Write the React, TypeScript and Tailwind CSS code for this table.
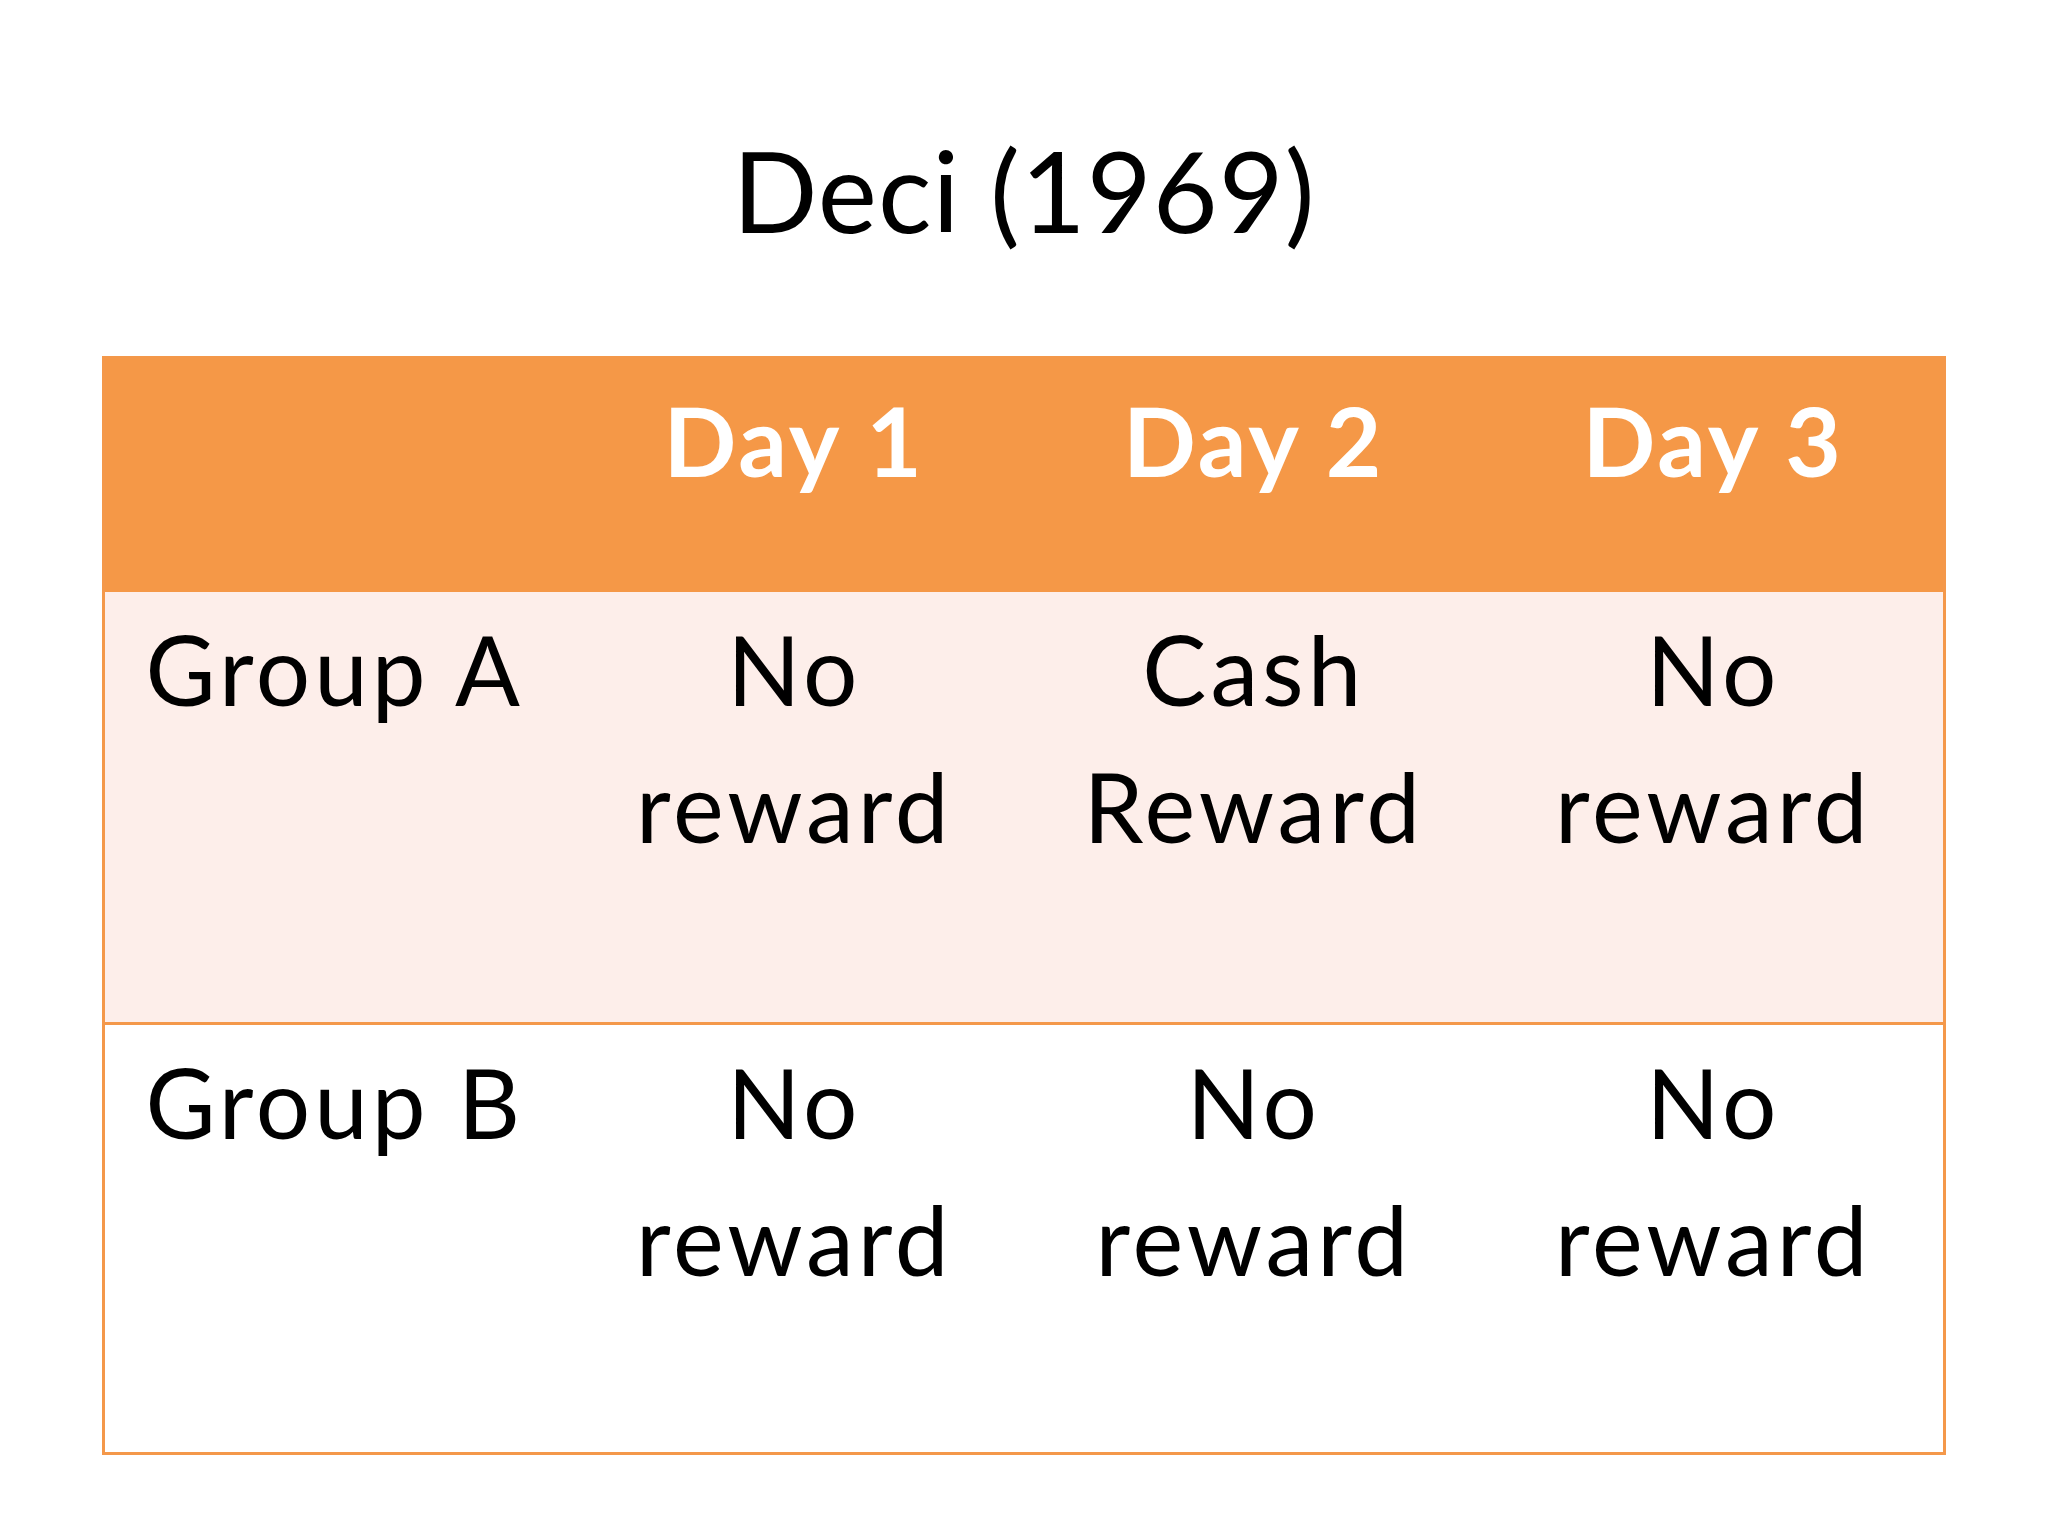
import React from 'react'

const days = ['Day 1', 'Day 2', 'Day 3']

const rows = [
  { name: 'Group A', cells: [['No', 'reward'], ['Cash', 'Reward'], ['No', 'reward']], bg: 'bg-[#fdeeea]' },
  { name: 'Group B', cells: [['No', 'reward'], ['No', 'reward'], ['No', 'reward']], bg: 'bg-white' },
]

const App = () => {
  return (
    <div className="w-[2048px] h-[1536px] bg-white font-['Lato','Liberation_Sans',sans-serif] text-black overflow-hidden">
      {/* Title */}
      <h1 className="pt-[123px] text-center text-[112px] leading-[134px] font-normal tracking-[1px]">Deci (1969)</h1>

      {/* Table */}
      <div className="mt-[99px] ml-[102px] w-[1844px] border-[3px] border-[#f4984a]">
        <div className="grid grid-cols-4 h-[233px] bg-[#f59847] pt-[12px]">
          <div></div>
          {days.map((d) => (
            <div key={d} className="text-center text-white font-bold text-[96px] leading-[137px] tracking-[3px]">
              {d}
            </div>
          ))}
        </div>
        {rows.map((row, i) => (
          <div
            key={row.name}
            className={`grid grid-cols-4 h-[430px] pt-[8px] ${row.bg} ${i > 0 ? 'border-t-[3px] border-[#f4984a]' : ''}`}
          >
            <div className="text-center text-[96px] leading-[137px] tracking-[4px]">{row.name}</div>
            {row.cells.map((c, j) => (
              <div key={j} className="text-center text-[96px] leading-[137px] tracking-[4px]">
                {c[0]}
                <br />
                {c[1]}
              </div>
            ))}
          </div>
        ))}
      </div>
    </div>
  )
}

export default App
